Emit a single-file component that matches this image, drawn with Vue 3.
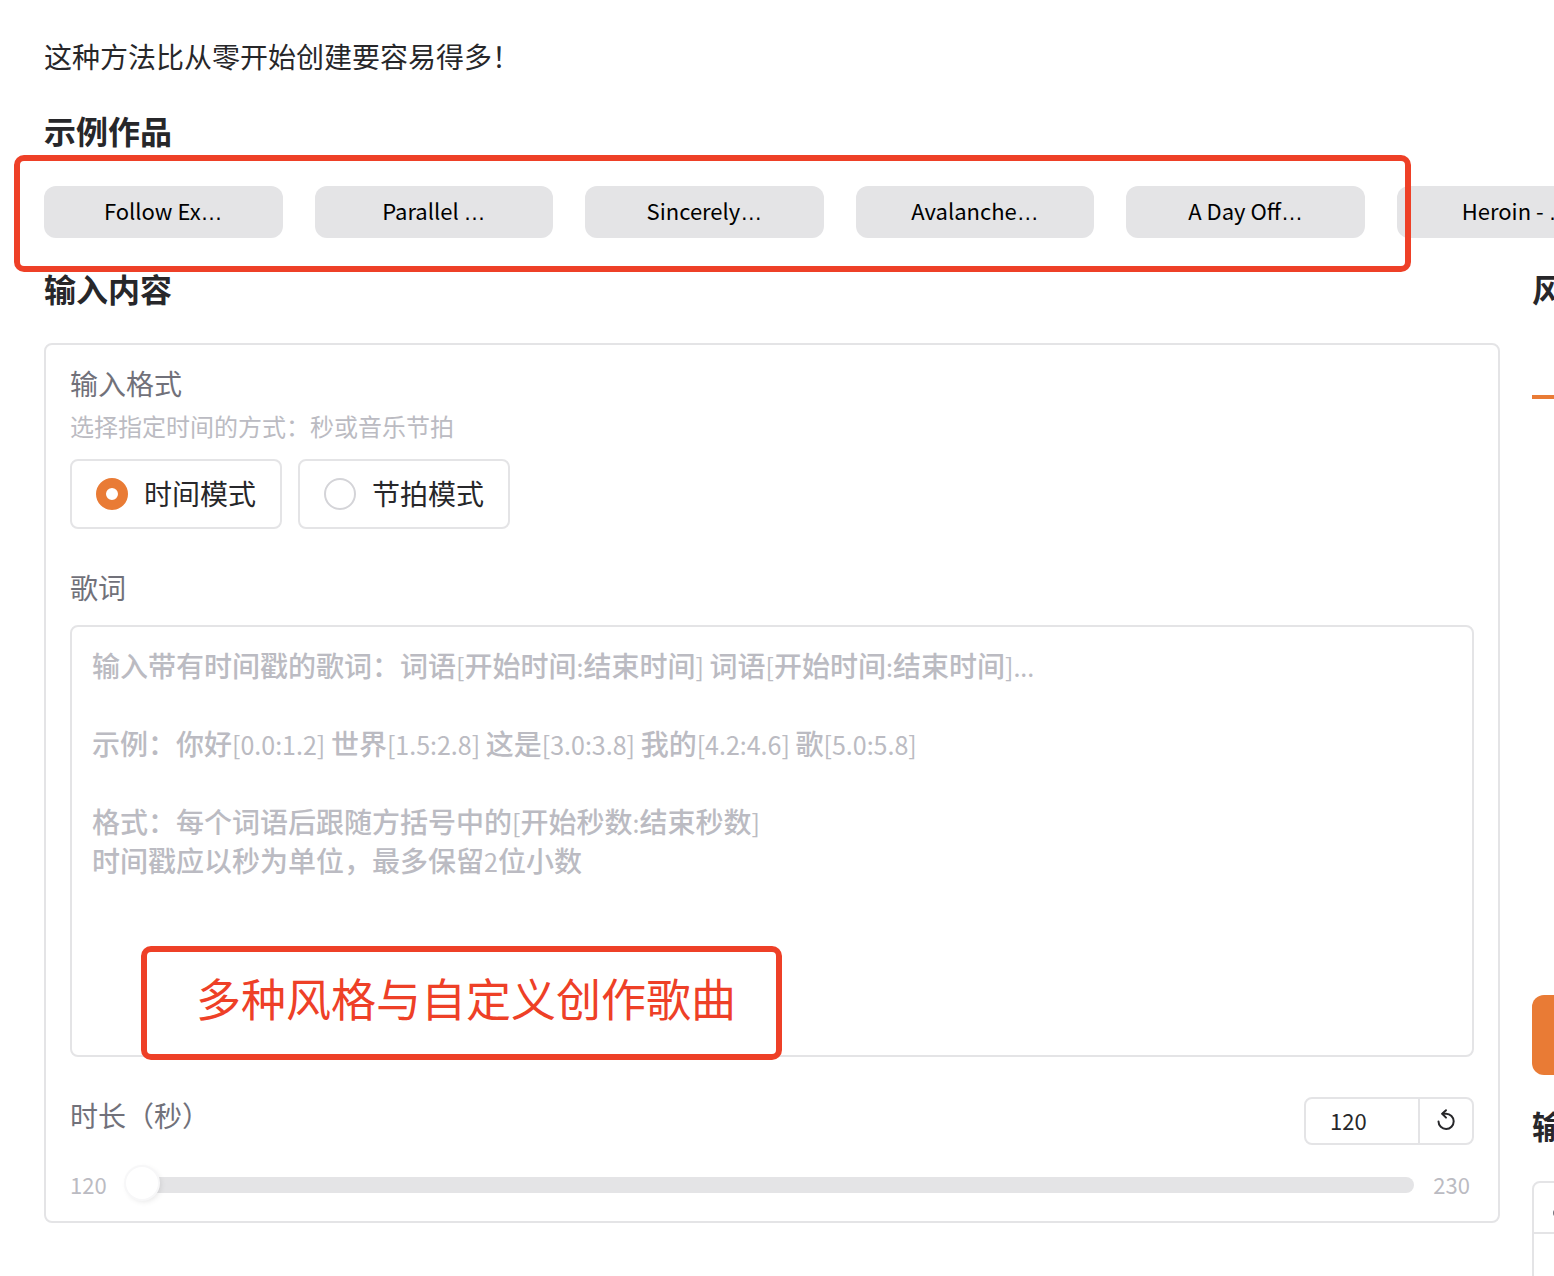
<script setup>
import { ref, computed } from 'vue'

const examples = ['Follow Ex', 'Parallel ', 'Sincerely', 'Avalanche', 'A Day Off', 'Heroin - ']

const modes = [
  { value: 'time', label: '时间模式' },
  { value: 'beat', label: '节拍模式' }
]

const mode = ref('time')
const lyrics = ref('')
const duration = ref(120)
const minDuration = 120
const maxDuration = 230

const hint = `输入带有时间戳的歌词：词语[开始时间:结束时间] 词语[开始时间:结束时间]...

示例：你好[0.0:1.2] 世界[1.5:2.8] 这是[3.0:3.8] 我的[4.2:4.6] 歌[5.0:5.8]

格式：每个词语后跟随方括号中的[开始秒数:结束秒数]
时间戳应以秒为单位，最多保留2位小数`

// 西文与中文分段，西文字号略小
const hintParts = computed(() =>
  hint.split(/([\x20-\x7e]+)/).map((text) => ({
    text,
    latin: /^[\x20-\x7e]+$/.test(text)
  }))
)

const reset = () => {
  duration.value = minDuration
}
</script>

<template>
  <div class="page">
    <p class="intro">这种方法比从零开始创建要容易得多！</p>

    <h2 class="heading">示例作品</h2>
    <div class="examples">
      <button v-for="name in examples" :key="name" type="button" class="example-btn">
        {{ name }}<span class="dots">…</span>
      </button>
      <div class="mark mark-examples"></div>
    </div>

    <div class="columns">
      <!-- 输入 -->
      <section class="main">
        <h2 class="heading">输入内容</h2>
        <div class="card">
          <fieldset class="field">
            <legend class="label">输入格式</legend>
            <p class="info">选择指定时间的方式：秒或音乐节拍</p>
            <div class="radios">
              <label v-for="item in modes" :key="item.value" class="radio">
                <input v-model="mode" type="radio" name="mode" :value="item.value" />
                <span>{{ item.label }}</span>
              </label>
            </div>
          </fieldset>

          <div class="field">
            <label class="label" for="lyrics">歌词</label>
            <div class="lyrics">
              <textarea id="lyrics" v-model="lyrics" class="lyrics-input"></textarea>
              <div v-if="!lyrics" class="lyrics-hint"><span
                v-for="(part, i) in hintParts"
                :key="i"
                :class="{ latin: part.latin }"
              >{{ part.text }}</span></div>
              <div class="mark mark-note">多种风格与自定义创作歌曲</div>
            </div>
          </div>

          <div class="field">
            <div class="duration-head">
              <label class="label" for="duration">时长（秒）</label>
              <div class="number-box">
                <input id="duration" v-model.number="duration" type="number" :min="minDuration" :max="maxDuration" />
                <button type="button" aria-label="重置" @click="reset">
                  <svg
                    width="20"
                    height="24"
                    viewBox="0 0 20 24"
                    fill="none"
                    stroke="currentColor"
                    stroke-width="2"
                    stroke-linecap="round"
                    stroke-linejoin="round"
                  >
                    <path d="M2.5 13.5A7.6 7.6 0 1 0 10.1 5.8H6.5" />
                    <path d="M10 2.2L6.2 5.8L10 9.6" />
                  </svg>
                </button>
              </div>
            </div>
            <div class="slider-row">
              <span>{{ minDuration }}</span>
              <input
                v-model.number="duration"
                class="slider"
                type="range"
                aria-label="时长（秒）"
                :min="minDuration"
                :max="maxDuration"
              />
              <span>{{ maxDuration }}</span>
            </div>
          </div>
        </div>
      </section>

      <!-- 风格与输出 -->
      <section class="side">
        <h2 class="heading">风格</h2>
        <div class="tab-panel"></div>
        <button type="button" class="generate" aria-label="生成"></button>
        <h2 class="heading">输出</h2>
        <div class="output">
          <div class="output-head">
            <svg width="24" height="24" viewBox="0 0 24 24" fill="none" stroke="currentColor" stroke-width="2">
              <circle cx="7" cy="12" r="3" />
              <path d="M10 12V2L20 1" />
            </svg>
          </div>
        </div>
      </section>
    </div>
  </div>
</template>

<style>
body {
  margin: 0;
  background: #fff;
}
</style>

<style scoped>
.page {
  box-sizing: border-box;
  min-height: 100vh;
  padding: 35px 0 0 44px;
  overflow: hidden;
  color: #27272a;
  font-family: "Noto Sans CJK SC", sans-serif;
  font-size: 28px;
  line-height: 42px;
}

.page * {
  box-sizing: border-box;
}

.page button,
.page input,
.page textarea {
  color: inherit;
  font-family: inherit;
}

.intro {
  margin: 0 0 29px;
}

.heading {
  margin: 0;
  font-size: 32px;
  font-weight: 600;
  line-height: 48px;
}

.examples {
  position: relative;
  display: flex;
  gap: 32px;
  margin: 32px 0 26px;
}

.page .example-btn {
  flex: 0 0 15.8%;
  height: 52px;
  padding: 0 0 2px;
  border: 0;
  border-radius: 12px;
  background: #e4e4e6;
  color: #000;
  font-size: 22px;
  line-height: 32px;
  white-space: pre;
}

.dots {
  font-family: "Liberation Sans", sans-serif;
}

.mark {
  position: absolute;
  border: 6px solid #ee4027;
  border-radius: 10px;
  pointer-events: none;
}

.mark-examples {
  inset: -31px 143px -34px -30px;
}

.mark-note {
  left: 71px;
  bottom: -3px;
  padding: 13px 40px 23px 49px;
  color: #ee4027;
  font-size: 45px;
  line-height: 66px;
  white-space: nowrap;
}

.columns {
  display: flex;
  gap: 32px;
}

.main {
  flex: 0 0 calc(100% - 54px);
}

.side {
  display: flex;
  flex: 0 0 50%;
  flex-direction: column;
}

.card {
  display: flex;
  flex-direction: column;
  gap: 37px;
  margin-top: 31px;
  padding: 17px 24px 18px;
  border: 2px solid #e4e4e6;
  border-radius: 8px;
}

.field {
  min-width: 0;
  margin: 0;
  padding: 0;
  border: 0;
}

.label {
  display: block;
  padding: 0;
  color: #71717a;
}

.info {
  margin: 4px 0 15px;
  color: #bbbbc2;
  font-size: 24px;
  line-height: 36px;
}

.radios {
  display: flex;
  gap: 16px;
}

.radio {
  display: flex;
  align-items: center;
  gap: 16px;
  height: 70px;
  padding: 0 24px;
  border: 2px solid #e4e4e6;
  border-radius: 8px;
}

.radio span {
  padding-bottom: 2px;
}

.radio input {
  width: 32px;
  height: 32px;
  margin: 0;
  border: 2px solid #d4d4d8;
  border-radius: 50%;
  background: #fff;
  appearance: none;
}

.radio input:checked {
  border: 10px solid #e97b35;
}

.lyrics {
  position: relative;
  margin-top: 17px;
}

.lyrics-input,
.lyrics-hint {
  padding: 19px 20px;
  border: 2px solid #e4e4e6;
  border-radius: 8px;
  font-size: 28px;
  line-height: 39px;
}

.lyrics-input {
  display: block;
  width: 100%;
  height: 432px;
  background: #fff;
  resize: none;
}

.lyrics-hint {
  position: absolute;
  inset: 0;
  border-color: transparent;
  color: #bbbbc2;
  font-weight: 500;
  white-space: pre-wrap;
  pointer-events: none;
}

.latin {
  font-size: 25px;
  font-weight: 400;
  line-height: 1;
}

.duration-head {
  display: flex;
  align-items: flex-start;
  justify-content: space-between;
}

.number-box {
  display: flex;
  width: 170px;
  height: 48px;
  margin-top: 3px;
  border: 2px solid #e4e4e6;
  border-radius: 8px;
  overflow: hidden;
}

.number-box input {
  flex: 1;
  min-width: 0;
  padding: 0 24px 2px;
  border: 0;
  background: none;
  font-size: 22px;
  appearance: textfield;
}

.number-box input::-webkit-inner-spin-button {
  appearance: none;
  margin: 0;
}

.number-box button {
  display: flex;
  align-items: center;
  justify-content: center;
  width: 54px;
  padding: 0 0 2px;
  border: 0;
  border-left: 2px solid #e4e4e6;
  background: none;
}

.slider-row {
  display: flex;
  align-items: center;
  gap: 19px;
  height: 36px;
  margin-top: 22px;
  padding-right: 4px;
  color: #bbbbc2;
  font-size: 22px;
  line-height: 32px;
}

.slider-row span {
  padding-bottom: 2px;
}

.slider {
  flex: 1;
  min-width: 0;
  height: 16px;
  margin: 0;
  border-radius: 8px;
  background: #e4e4e6;
  appearance: none;
}

.slider::-webkit-slider-thumb {
  width: 32px;
  height: 32px;
  margin-top: -4px;
  border-radius: 50%;
  background: #fff;
  box-shadow: 0 0 0 2px #f7f7f8, 2px 2px 6px rgba(0, 0, 0, 0.12);
  appearance: none;
}

.tab-panel {
  height: 600px;
  margin-top: 83px;
  border-top: 4px solid #e97b35;
}

.generate {
  height: 80px;
  margin-bottom: 26px;
  border: 0;
  border-radius: 12px;
  background: #e97b35;
}

.output {
  height: 400px;
  margin: 32px 0 -400px;
  border: 2px solid #e4e4e6;
  border-radius: 8px;
}

.output-head {
  display: flex;
  align-items: center;
  height: 51px;
  padding: 10px 16px 0;
  border-bottom: 2px solid #e4e4e6;
  color: #71717a;
}
</style>
